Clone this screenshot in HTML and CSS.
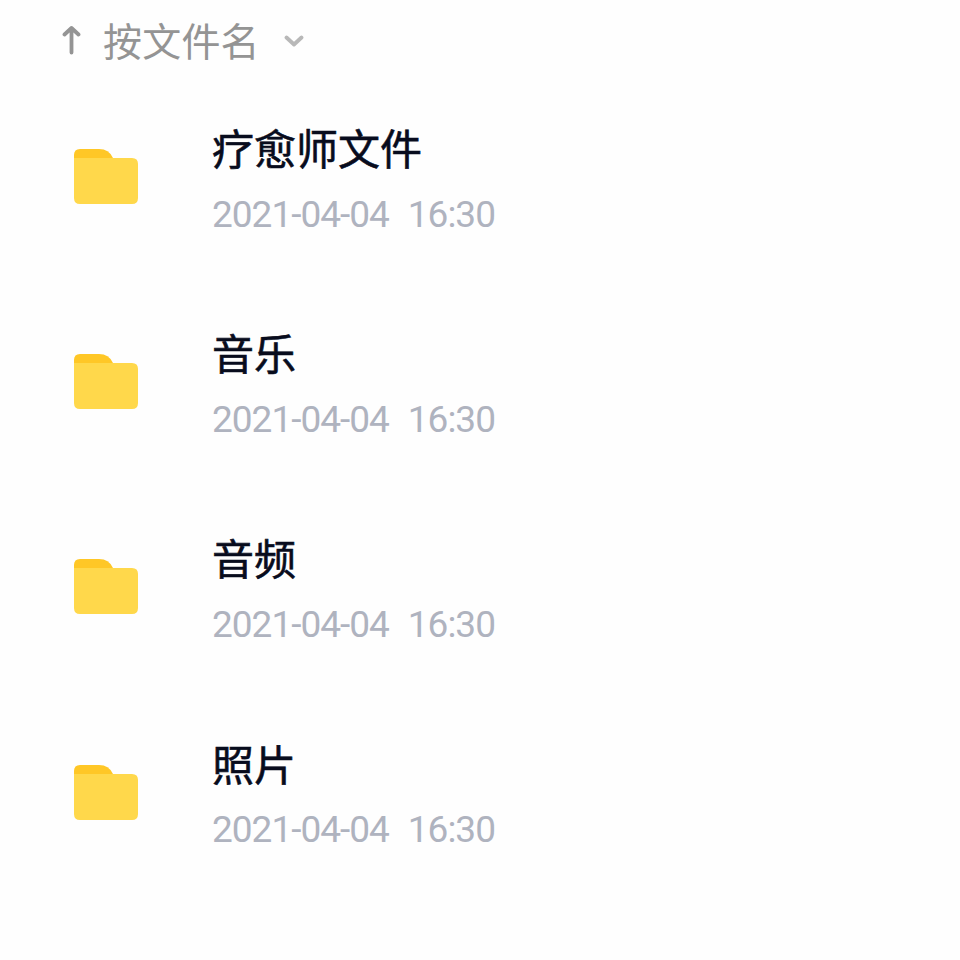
FILE: index.html
```html
<!DOCTYPE html>
<html lang="zh-CN">
<head>
<meta charset="utf-8">
<title>文件</title>
<link rel="stylesheet" href="styles.css">
</head>
<body>
<header class="sort">
<svg class="arrow" viewBox="0 0 20 32"><path d="M10.500 27.500V3M3.500 9.500l7-6.500 7 6.500"/></svg>
<span class="sort-label">按文件名</span>
<svg class="chevron" viewBox="0 0 20 14"><path d="m2.500 3.500 7.500 7 7.500-7"/></svg>
</header>
<main class="list">
<article class="row"><svg class="folder" viewBox="0 0 64 56"><path class="back" d="M0 20V6q0-6 6-6h19q10 0 14 9v11z"/><path class="front" d="M0 9h58q6 0 6 6v34q0 6-6 6H6q-6 0-6-6z"/></svg><div class="info"><h2>疗愈师文件</h2><p><span>2021-04-04</span><span>16:30</span></p></div></article>
<article class="row"><svg class="folder" viewBox="0 0 64 56"><path class="back" d="M0 20V6q0-6 6-6h19q10 0 14 9v11z"/><path class="front" d="M0 9h58q6 0 6 6v34q0 6-6 6H6q-6 0-6-6z"/></svg><div class="info"><h2>音乐</h2><p><span>2021-04-04</span><span>16:30</span></p></div></article>
<article class="row"><svg class="folder" viewBox="0 0 64 56"><path class="back" d="M0 20V6q0-6 6-6h19q10 0 14 9v11z"/><path class="front" d="M0 9h58q6 0 6 6v34q0 6-6 6H6q-6 0-6-6z"/></svg><div class="info"><h2>音频</h2><p><span>2021-04-04</span><span>16:30</span></p></div></article>
<article class="row"><svg class="folder" viewBox="0 0 64 56"><path class="back" d="M0 20V6q0-6 6-6h19q10 0 14 9v11z"/><path class="front" d="M0 9h58q6 0 6 6v34q0 6-6 6H6q-6 0-6-6z"/></svg><div class="info"><h2>照片</h2><p><span>2021-04-04</span><span>16:30</span></p></div></article>
</main>
</body>
</html>
```
FILE: styles.css
```css
* { box-sizing: border-box; }
body { margin: 0; background: #fefefe; font-family: Roboto, "Noto Sans CJK SC", sans-serif; }
.sort { display: flex; align-items: center; height: 82px; padding-left: 61px; color: #949494; }
.arrow { width: 20px; height: 32px; }
.arrow path, .chevron path { fill: none; stroke: currentColor; stroke-width: 3.8; stroke-linecap: round; stroke-linejoin: round; }
.sort-label { width: 156px; margin-left: 22px; padding-top: 4px; font-size: 39px; line-height: 60px; letter-spacing: 0.2px; white-space: nowrap; }
.chevron { width: 20px; height: 14px; margin-left: 25px; color: #b8b8b8; }
.list { padding-top: 38px; }
.row { display: flex; height: 205.2px; padding-left: 73.5px; }
.folder { width: 64px; height: 56px; margin-top: 29px; }
.back { fill: #ffc726; }
.front { fill: #ffd84b; }
.info { margin-left: 74.5px; padding-top: 1px; }
h2 { margin: 0; font-size: 42px; line-height: 60px; font-weight: 400; color: #080c1d; -webkit-text-stroke: 0.6px #080c1d; }
p { display: flex; gap: 19px; margin: 11.8px 0 0; font-size: 37px; line-height: 44px; letter-spacing: -1px; color: #afb3bf; }
```
